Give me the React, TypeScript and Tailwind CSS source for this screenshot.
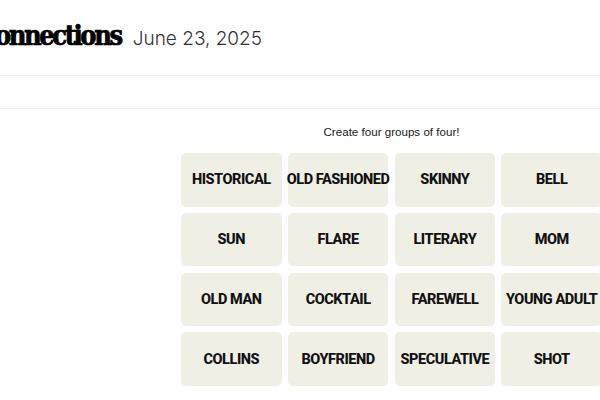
const words = [
  'HISTORICAL', 'OLD FASHIONED', 'SKINNY', 'BELL',
  'SUN', 'FLARE', 'LITERARY', 'MOM',
  'OLD MAN', 'COCKTAIL', 'FAREWELL', 'YOUNG ADULT',
  'COLLINS', 'BOYFRIEND', 'SPECULATIVE', 'SHOT',
]

export default function App() {
  return (
    <div className="w-[600px] h-[400px] overflow-hidden bg-white">
      {/* header */}
      <header className="h-[76px] border-b border-[#ebebeb] flex items-baseline pt-[20px] whitespace-nowrap">
        <h1 className="ml-[-22px] text-[27px] leading-[32px] font-bold tracking-[-2.4px] text-black [-webkit-text-stroke:0.7px_black] [font-family:'DejaVu_Serif_Condensed','DejaVu_Serif',serif]">
          Connections
        </h1>
        <span className="ml-[12px] text-[19px] font-light text-[#333] [font-family:Inter,sans-serif]">
          June 23, 2025
        </span>
      </header>

      {/* toolbar band */}
      <div className="h-[33px] border-b border-[#ebebeb]" />

      {/* board */}
      <main className="pl-[181px] pt-[15px] w-[700px]">
        <div className="w-[421px] flex flex-col items-center">
          <p className="text-[11.6px] leading-[16px] text-[#1a1a1a] [font-family:'Liberation_Sans',Arial,sans-serif]">
            Create four groups of four!
          </p>
          <div className="mt-[13px] grid grid-cols-[repeat(4,100.5px)] auto-rows-[53.5px] gap-[6.3px]">
            {words.map((w) => (
              <div
                key={w}
                className="bg-[#efefe6] rounded-[5px] flex items-center justify-center pt-[1px] text-[14.5px] font-extrabold tracking-[-0.45px] text-[#121212] whitespace-nowrap [font-family:Roboto,sans-serif]"
              >
                {w}
              </div>
            ))}
          </div>
        </div>
      </main>
    </div>
  )
}
